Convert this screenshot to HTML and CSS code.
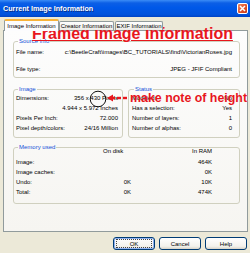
FILE: index.html
```html
<!DOCTYPE html>
<html lang="en">
<head>
    <meta charset="UTF-8">
    <meta name="viewport" content="width=device-width, initial-scale=1.0">
    <title>Current Image Information</title>
    <link rel="stylesheet" href="styles.css">
</head>

<body>
<div class="window">
    <div class="titlebar">
        <span class="title">Current Image Information</span>
        <span class="close-btn">
            <svg width="7" height="7" viewBox="0 0 7 7"><path d="M1 1L6 6M6 1L1 6" stroke="#fff" stroke-width="1.5"/></svg>
        </span>
    </div>

    <div class="tabs">
        <div class="tab active">Image Information</div>
        <div class="tab creator">Creator Information</div>
        <div class="tab exif">EXIF Information</div>
    </div>

    <div class="panel">
        <fieldset class="group source">
            <legend>Source info</legend>
            <div class="rows">
                <div class="row"><span>File name:</span><span>c:\BeetleCraft\images\BC_TUTORIALS\find\VictorianRoses.jpg</span></div>
                <div class="row"><span>File type:</span><span>JPEG - JFIF Compliant</span></div>
            </div>
        </fieldset>

        <div class="pair">
            <fieldset class="group image">
                <legend>Image</legend>
                <div class="rows">
                    <div class="row"><span>Dimensions:</span><span>356 x 430 Pixels</span></div>
                    <div class="row"><span></span><span>4.944 x 5.972 Inches</span></div>
                    <div class="row"><span>Pixels Per Inch:</span><span>72.000</span></div>
                    <div class="row"><span>Pixel depth/colors:</span><span>24/16 Million</span></div>
                </div>
            </fieldset>
            <fieldset class="group status">
                <legend>Status</legend>
                <div class="rows">
                    <div class="row"><span>Modified:</span><span>No</span></div>
                    <div class="row"><span>Has a selection:</span><span>Yes</span></div>
                    <div class="row"><span>Number of layers:</span><span>1</span></div>
                    <div class="row"><span>Number of alphas:</span><span>0</span></div>
                </div>
            </fieldset>
        </div>

        <fieldset class="group memory">
            <legend>Memory used</legend>
            <div class="mem-grid">
                <span class="head"></span><span class="head disk">On disk</span><span class="head ram">In RAM</span>
                <span>Image:</span><span></span><span class="num">464K</span>
                <span>Image caches:</span><span></span><span class="num">0K</span>
                <span>Undo:</span><span class="num">0K</span><span class="num">10K</span>
                <span>Total:</span><span class="num">0K</span><span class="num">474K</span>
            </div>
        </fieldset>
    </div>

    <div class="buttons">
        <div class="btn ok"><span>OK</span></div>
        <div class="btn">Cancel</div>
        <div class="btn">Help</div>
    </div>

    <!-- red annotations drawn over the dialog -->
    <div class="headline">Framed Image Information</div>
    <svg class="ring" width="18" height="18" viewBox="0 0 18 18"><circle cx="9" cy="9" r="7.8" fill="none" stroke="#111" stroke-width="1"/></svg>
    <svg class="arrow" width="22" height="10" viewBox="0 0 22 10">
        <path d="M1 5L7 1.5L7 3.8L9 3.8L9 6.2L7 6.2L7 8.5Z" fill="#e8161d"/>
        <rect x="11" y="3.8" width="4" height="2.4" fill="#e8161d"/>
        <rect x="17" y="3.8" width="4" height="2.4" fill="#e8161d"/>
    </svg>
    <div class="note">make note of height</div>
</div>
</body>

</html>
```

FILE: styles.css
```css
* {
    box-sizing: border-box;
}

body {
    margin: 0;
    width: 250px;
    height: 253px;
    overflow: hidden;
    background: #ece9d8;
    font-family: 'Liberation Sans', Arial, sans-serif;
    font-size: 6px;
    color: #000;
}

.window {
    position: relative;
    height: 253px;
    display: flex;
    flex-direction: column;
}

.titlebar {
    height: 17px;
    display: flex;
    align-items: center;
    justify-content: space-between;
    padding: 0 2px 0 3px;
    background: linear-gradient(#3b8cf6 0, #0c5fe6 3px, #0058e8 45%, #0052dc 85%, #0043c4 100%);
}

.title {
    color: #fff;
    font-weight: bold;
    font-size: 7.2px;
    text-shadow: 1px 1px 0 #0a2f8a;
}

.close-btn {
    width: 11px;
    height: 11px;
    border: 1px solid #fff;
    border-radius: 2px;
    background: linear-gradient(135deg, #f08a62, #e0502a 55%, #c83a1a);
    display: flex;
    align-items: center;
    justify-content: center;
}

.tabs {
    display: flex;
    align-items: flex-end;
    height: 11px;
    margin: 2px 0 0 4px;
    position: relative;
    z-index: 1;
}

.tab {
    height: 9px;
    line-height: 8px;
    text-align: center;
    border: 1px solid #919b9c;
    border-bottom: none;
    border-radius: 2px 2px 0 0;
    background: linear-gradient(#fefefe, #ecebe6);
    white-space: nowrap;
}

.tab.active {
    width: 55px;
    height: 12px;
    line-height: 10px;
    margin-bottom: -1px;
    background: #fcfcfe;
    border-top: 2px solid #f8b33a;
}

.tab.creator {
    width: 55px;
}

.tab.exif {
    width: 48px;
    margin-left: 1px;
}

.panel {
    height: 202px;
    margin: 0 2px 0 3px;
    padding: 6px 7px 0 9px;
    border: 1px solid #919b9c;
    background: linear-gradient(#fdfdfd, #f6f5f1);
}

.group {
    margin: 0;
    padding: 0 7px 0 2px;
    border: 1px solid #d0d0bf;
    border-radius: 3px;
    min-width: 0;
}

.group legend {
    color: #1450d8;
    line-height: 8px;
    padding: 0 1px;
    margin-left: 2px;
}

.row {
    display: flex;
    justify-content: space-between;
    line-height: 10px;
    white-space: nowrap;
}

.source {
    height: 41px;
}

.source .rows {
    padding-top: 2px;
    display: flex;
    flex-direction: column;
    gap: 7px;
}

.pair {
    display: flex;
    gap: 5px;
    margin-top: 7px;
}

.image {
    width: 110px;
    height: 53px;
    padding-right: 4px;
}

.status {
    flex: 1;
    height: 53px;
    padding-left: 3px;
}

.memory {
    height: 61px;
    margin-top: 5px;
}

.mem-grid {
    display: grid;
    grid-template-columns: 84px 31px 81px;
    line-height: 10px;
}

.mem-grid .head {
    margin-top: -5px;
    margin-bottom: 1px;
}

.mem-grid .disk {
    padding-left: 3px;
}

.mem-grid .ram,
.mem-grid .num {
    text-align: right;
}

.buttons {
    display: flex;
    justify-content: flex-end;
    gap: 4px;
    margin-top: 5px;
    padding-right: 3px;
}

.btn {
    width: 42px;
    height: 13px;
    display: flex;
    align-items: center;
    justify-content: center;
    border: 1px solid #003c74;
    border-radius: 3px;
    background: linear-gradient(#ffffff, #f3f2ec 75%, #d8d3c8);
}

.btn.ok {
    box-shadow: inset 0 0 0 1px #8fb2f0;
}

.btn.ok span {
    display: flex;
    align-items: center;
    justify-content: center;
    width: 36px;
    height: 9px;
    border: 1px dotted #444;
}

.headline {
    position: absolute;
    left: 32px;
    top: 25px;
    color: #e8161d;
    font-size: 16px;
    font-weight: bold;
    text-decoration: underline;
    text-decoration-thickness: 1px;
    white-space: nowrap;
}

.ring {
    position: absolute;
    left: 89px;
    top: 90px;
}

.arrow {
    position: absolute;
    left: 106px;
    top: 93px;
}

.note {
    position: absolute;
    left: 130px;
    top: 91px;
    color: #e8161d;
    font-size: 12.4px;
    font-weight: bold;
    white-space: nowrap;
}
```
